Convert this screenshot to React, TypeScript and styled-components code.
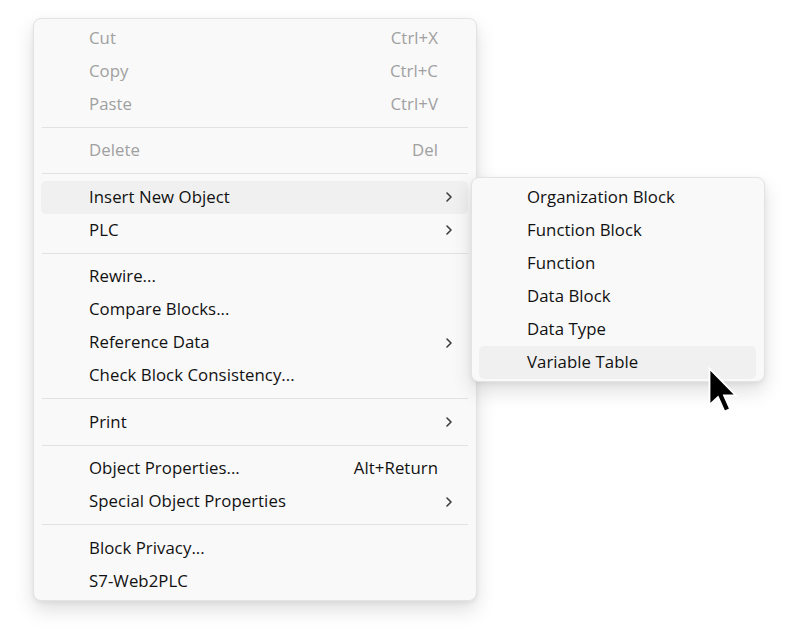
import React from "react";
import styled, { createGlobalStyle } from "styled-components";

const Global = createGlobalStyle`
  html, body { margin: 0; padding: 0; background: #ffffff; }
  body { font-family: "Open Sans", "Noto Sans", sans-serif; }
`;

const Stage = styled.div`
  position: relative;
  width: 794px;
  height: 633px;
  padding: 18px 0 0 33px;
  box-sizing: border-box;
`;

const Menu = styled.div<{ $width: number }>`
  width: ${(p) => p.$width}px;
  box-sizing: border-box;
  background: #f9f9f9;
  border: 1px solid #e3e3e3;
  border-radius: 8px;
  padding: 2.5px 0;
  box-shadow: 0 9px 20px rgba(0, 0, 0, 0.13), 0 2px 5px rgba(0, 0, 0, 0.06);
  display: flex;
  flex-direction: column;
`;

const SubMenu = styled(Menu)`
  position: absolute;
  left: 471px;
  top: 177px;
`;

const Item = styled.div<{ $disabled?: boolean; $active?: boolean; $indent: number }>`
  height: 33px;
  box-sizing: border-box;
  margin: 0 8px 0 7px;
  border-radius: 5px;
  display: flex;
  align-items: center;
  padding: 0 0 2px ${(p) => p.$indent}px;
  font-size: 16.8px;
  letter-spacing: 0.05px;
  color: ${(p) => (p.$disabled ? "#a0a0a0" : "#111111")};
  background: ${(p) => (p.$active ? "#f0f0f0" : "transparent")};
`;

const Label = styled.span`
  flex: 1;
  white-space: nowrap;
`;

const Shortcut = styled.span`
  text-align: right;
  padding-right: 30px;
  white-space: nowrap;
`;

const Chevron = styled.span`
  width: 24px;
  display: flex;
  align-items: center;
  justify-content: flex-start;
  padding-top: 2px;
`;

const Separator = styled.div`
  height: 1px;
  background: #e2e2e2;
  margin: 6px 8px 6.5px 8px;
`;

const Cursor = styled.svg`
  position: absolute;
  left: 707px;
  top: 366px;
`;

type Entry =
  | { sep: true }
  | { label: string; shortcut?: string; sub?: boolean; disabled?: boolean; active?: boolean };

const main: Entry[] = [
  { label: "Cut", shortcut: "Ctrl+X", disabled: true },
  { label: "Copy", shortcut: "Ctrl+C", disabled: true },
  { label: "Paste", shortcut: "Ctrl+V", disabled: true },
  { sep: true },
  { label: "Delete", shortcut: "Del", disabled: true },
  { sep: true },
  { label: "Insert New Object", sub: true, active: true },
  { label: "PLC", sub: true },
  { sep: true },
  { label: "Rewire..." },
  { label: "Compare Blocks..." },
  { label: "Reference Data", sub: true },
  { label: "Check Block Consistency..." },
  { sep: true },
  { label: "Print", sub: true },
  { sep: true },
  { label: "Object Properties...", shortcut: "Alt+Return" },
  { label: "Special Object Properties", sub: true },
  { sep: true },
  { label: "Block Privacy..." },
  { label: "S7-Web2PLC" },
];

const sub = [
  "Organization Block",
  "Function Block",
  "Function",
  "Data Block",
  "Data Type",
  "Variable Table",
];

const ChevronIcon = () => (
  <svg width="10" height="12" viewBox="0 0 10 12">
    <path d="M3 2 L7 6 L3 10" fill="none" stroke="#3c3c3c" strokeWidth="1.6" strokeLinecap="round" strokeLinejoin="round" />
  </svg>
);

export default function App() {
  return (
    <>
      <Global />
      <Stage>
        <Menu $width={444}>
          {main.map((e, i) =>
            "sep" in e ? (
              <Separator key={i} />
            ) : (
              <Item key={i} $indent={48} $disabled={e.disabled} $active={e.active}>
                <Label>{e.label}</Label>
                {e.shortcut && <Shortcut>{e.shortcut}</Shortcut>}
                {e.sub && (
                  <Chevron>
                    <ChevronIcon />
                  </Chevron>
                )}
              </Item>
            )
          )}
        </Menu>
        <SubMenu $width={294}>
          {sub.map((s, i) => (
            <Item key={s} $indent={48} $active={i === sub.length - 1}>
              <Label>{s}</Label>
            </Item>
          ))}
        </SubMenu>
        <Cursor width="34" height="52" viewBox="0 0 34 52">
          <path
            d="M2.5 2.5 L2.5 39 L11 31 L17.5 45.5 L23 43 L17 29.5 L29 29.5 Z"
            fill="#000"
            stroke="#fff"
            strokeWidth="1.8"
            strokeLinejoin="miter"
          />
        </Cursor>
      </Stage>
    </>
  );
}
